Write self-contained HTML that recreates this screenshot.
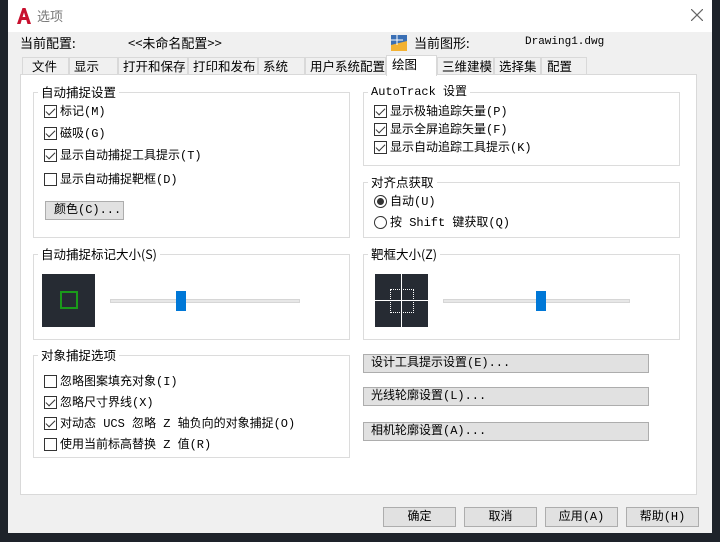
<!DOCTYPE html>
<html><head><meta charset="utf-8"><style>
*{box-sizing:border-box;margin:0;padding:0}
body{width:720px;height:542px;background:#1e232a;position:relative;overflow:hidden;font-family:"Liberation Mono","Noto Sans CJK SC",monospace;font-size:12px;color:#000}
.a{position:absolute;white-space:nowrap}
.dlg{position:absolute;left:8px;top:0;width:704px;height:533px;background:#f0f0f0}
.tb{position:absolute;left:8px;top:0;width:704px;height:32px;background:#fff}
.s{font-family:"Noto Sans CJK SC","Liberation Sans",sans-serif;font-size:13px}
.tab{position:absolute;top:57px;height:18px;border:1px solid #d9d9d9;border-bottom:none;background:#f0f0f0;font-family:"Noto Sans CJK SC",sans-serif;font-size:12.5px;line-height:16px;padding-left:9px;white-space:nowrap;overflow:hidden}
.panel{position:absolute;left:20px;top:74px;width:677px;height:421px;background:#fff;border:1px solid #d9d9d9}
.g{position:absolute;border:1px solid #dcdcdc}
.lg{position:absolute;background:#fff;padding:0 3px;line-height:14px;white-space:nowrap}
.cb{position:absolute;width:13px;height:13px;border:1px solid #333;background:#fff}
.cb.c::after{content:"";position:absolute;left:3px;top:0px;width:4px;height:8px;border:solid #333;border-width:0 1.5px 1.5px 0;transform:rotate(45deg)}
.t{position:absolute;line-height:14px;white-space:nowrap}
.btn{position:absolute;background:#e1e1e1;border:1px solid #adadad;line-height:16px;padding-left:6px;white-space:nowrap}
.rb{position:absolute;width:13px;height:13px;border:1px solid #333;border-radius:50%;background:#fff}
.track{position:absolute;height:4px;background:#e7e7e7;border:1px solid #d6d6d6}
.thumb{position:absolute;width:10px;height:20px;background:#0078d7}
</style></head><body>
<div class="dlg"></div>
<div class="tb"></div>
<svg class="a" style="left:16px;top:8px" width="16" height="16" viewBox="0 0 16 16"><path d="M1 16 L6.5 0 H9.5 L15 16 H11.5 L10.3 12 H5.7 L4.5 16 Z M6.6 9 H9.4 L8 4.5 Z" fill="#c8102e"/></svg>
<div class="a s" style="left:37px;top:6px;color:#777;font-size:13px">选项</div>
<svg class="a" style="left:691px;top:9px" width="12" height="12"><path d="M0 0 L12 12 M12 0 L0 12" stroke="#666" stroke-width="1.2"/></svg>
<div class="a s" style="left:20px;top:33px">当前配置:</div>
<div class="a s" style="left:128px;top:33px">&lt;&lt;未命名配置&gt;&gt;</div>
<svg class="a" style="left:391px;top:35px" width="16" height="16"><rect width="16" height="16" fill="#3a6fb5"/><path d="M0 10 L16 6 V16 H0Z" fill="#f3b233"/><path d="M6 0 V10 M0 5 H12" stroke="#fff" stroke-width="1"/></svg>
<div class="a s" style="left:414px;top:33px">当前图形:</div>
<div class="a" style="left:525px;top:36px;font-size:11px">Drawing1.dwg</div>

<div class="tab" style="left:22px;width:47px">文件</div>
<div class="tab" style="left:69px;width:49px;padding-left:4px">显示</div>
<div class="tab" style="left:118px;width:70px;padding-left:4px">打开和保存</div>
<div class="tab" style="left:188px;width:70px;padding-left:4px">打印和发布</div>
<div class="tab" style="left:258px;width:47px;padding-left:4px">系统</div>
<div class="tab" style="left:305px;width:81px;padding-left:4px">用户系统配置</div>
<div class="tab" style="left:437px;width:57px;padding-left:4px">三维建模</div>
<div class="tab" style="left:494px;width:47px;padding-left:4px">选择集</div>
<div class="tab" style="left:541px;width:46px;padding-left:5px">配置</div>
<div class="panel"></div>
<div class="tab" style="left:386px;top:55px;width:51px;height:21px;background:#fff;padding-left:5px">绘图</div>

<div class="g" style="left:33px;top:92px;width:317px;height:146px"></div>
<div class="lg s" style="left:38px;top:85px;font-size:12.5px">自动捕捉设置</div>
<div class="cb c" style="left:44px;top:105px"></div><div class="t" style="left:60px;top:105px">标记(M)</div>
<div class="cb c" style="left:44px;top:127px"></div><div class="t" style="left:60px;top:127px">磁吸(G)</div>
<div class="cb c" style="left:44px;top:149px"></div><div class="t" style="left:60px;top:149px">显示自动捕捉工具提示(T)</div>
<div class="cb" style="left:44px;top:173px"></div><div class="t" style="left:60px;top:173px">显示自动捕捉靶框(D)</div>
<div class="btn" style="left:45px;top:201px;width:79px;height:19px;padding-left:8px">颜色(C)...</div>

<div class="g" style="left:33px;top:254px;width:317px;height:86px"></div>
<div class="lg s" style="left:38px;top:247px;font-size:12.5px">自动捕捉标记大小(S)</div>
<div class="a" style="left:42px;top:274px;width:53px;height:53px;background:#262b33"></div>
<div class="a" style="left:60px;top:291px;width:18px;height:18px;border:2px solid #1a9a1a"></div>
<div class="track" style="left:110px;top:299px;width:190px"></div>
<div class="thumb" style="left:176px;top:291px"></div>

<div class="g" style="left:33px;top:355px;width:317px;height:103px"></div>
<div class="lg s" style="left:38px;top:348px;font-size:12.5px">对象捕捉选项</div>
<div class="cb" style="left:44px;top:375px"></div><div class="t" style="left:60px;top:375px">忽略图案填充对象(I)</div>
<div class="cb c" style="left:44px;top:396px"></div><div class="t" style="left:60px;top:396px">忽略尺寸界线(X)</div>
<div class="cb c" style="left:44px;top:417px"></div><div class="t" style="left:60px;top:417px">对动态 UCS 忽略 Z 轴负向的对象捕捉(O)</div>
<div class="cb" style="left:44px;top:438px"></div><div class="t" style="left:60px;top:438px">使用当前标高替换 Z 值(R)</div>

<div class="g" style="left:363px;top:92px;width:317px;height:74px"></div>
<div class="lg" style="left:368px;top:85px">AutoTrack 设置</div>
<div class="cb c" style="left:374px;top:105px"></div><div class="t" style="left:390px;top:105px">显示极轴追踪矢量(P)</div>
<div class="cb c" style="left:374px;top:123px"></div><div class="t" style="left:390px;top:123px">显示全屏追踪矢量(F)</div>
<div class="cb c" style="left:374px;top:141px"></div><div class="t" style="left:390px;top:141px">显示自动追踪工具提示(K)</div>

<div class="g" style="left:363px;top:182px;width:317px;height:56px"></div>
<div class="lg s" style="left:368px;top:175px;font-size:12.5px">对齐点获取</div>
<div class="rb" style="left:374px;top:195px"></div><div class="a" style="left:377px;top:198px;width:7px;height:7px;border-radius:50%;background:#333"></div>
<div class="t" style="left:390px;top:195px">自动(U)</div>
<div class="rb" style="left:374px;top:216px"></div><div class="t" style="left:390px;top:216px">按 Shift 键获取(Q)</div>

<div class="g" style="left:363px;top:254px;width:317px;height:86px"></div>
<div class="lg s" style="left:368px;top:247px;font-size:12.5px">靶框大小(Z)</div>
<div class="a" style="left:375px;top:274px;width:53px;height:53px;background:#262b33"></div>
<div class="a" style="left:401px;top:274px;width:1px;height:53px;background:#fff"></div>
<div class="a" style="left:375px;top:300px;width:53px;height:1px;background:#fff"></div>
<div class="a" style="left:390px;top:289px;width:24px;height:24px;border:1px dotted #fff"></div>
<div class="track" style="left:443px;top:299px;width:187px"></div>
<div class="thumb" style="left:536px;top:291px"></div>

<div class="btn" style="left:363px;top:354px;width:286px;height:19px;padding-left:7px">设计工具提示设置(E)...</div>
<div class="btn" style="left:363px;top:387px;width:286px;height:19px;padding-left:7px">光线轮廓设置(L)...</div>
<div class="btn" style="left:363px;top:422px;width:286px;height:19px;padding-left:7px">相机轮廓设置(A)...</div>

<div class="btn" style="left:383px;top:507px;width:73px;height:20px;text-align:center;padding:0;line-height:18px">确定</div>
<div class="btn" style="left:464px;top:507px;width:73px;height:20px;text-align:center;padding:0;line-height:18px">取消</div>
<div class="btn" style="left:545px;top:507px;width:73px;height:20px;text-align:center;padding:0;line-height:18px">应用(A)</div>
<div class="btn" style="left:626px;top:507px;width:73px;height:20px;text-align:center;padding:0;line-height:18px">帮助(H)</div>
</body></html>
